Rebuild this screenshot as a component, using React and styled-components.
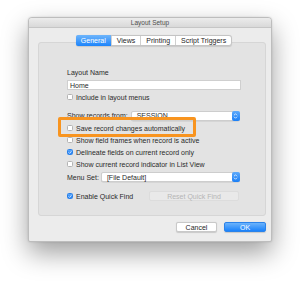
import React from 'react';
import styled, { createGlobalStyle } from 'styled-components';

const GlobalStyle = createGlobalStyle`
  html, body {
    margin: 0;
    background: #fff;
  }
  body {
    font-family: "Liberation Sans", Arial, sans-serif;
    font-size: 7px;
    color: #2a2a2a;
  }
`;

const Page = styled.div`
  width: 300px;
  height: 282px;
  box-sizing: border-box;
  padding: 17px 0 0 28px;
`;

const Window = styled.div`
  width: 244px;
  height: 225px;
  box-sizing: border-box;
  display: flex;
  flex-direction: column;
  background: #ececec;
  border: 1px solid #bdbdbd;
  border-radius: 4px 4px 2px 2px;
  box-shadow: 0 11px 26px rgba(0, 0, 0, 0.38), 0 0 2px rgba(0, 0, 0, 0.15);
  overflow: hidden;
`;

const TitleBar = styled.div`
  flex: none;
  height: 9px;
  display: flex;
  align-items: center;
  justify-content: center;
  background: linear-gradient(#ececec, #d9d9d9);
  border-bottom: 1px solid #c6c6c6;
  font-size: 6.5px;
  color: #4d4d4d;
`;

const Body = styled.div`
  display: flex;
  flex-direction: column;
  padding: 14px 5px 0 9px;
`;

const Panel = styled.div`
  height: 174px;
  box-sizing: border-box;
  display: flex;
  flex-direction: column;
  padding: 0 24px 0 28px;
  background: #e3e3e3;
  border: 1px solid #d6d6d6;
  border-radius: 3px;
`;

const TabStrip = styled.div`
  align-self: center;
  display: flex;
  margin-top: -8px;
  height: 11px;
  background: #fff;
  border: 1px solid #c4c4c4;
  border-radius: 3px;
  box-sizing: border-box;
  box-shadow: 0 0.5px 1px rgba(0, 0, 0, 0.12);
`;

const Tab = styled.div`
  display: flex;
  align-items: center;
  padding: 0 5px;
  font-size: 7px;
  color: ${p => (p.$active ? '#fff' : '#1e1e1e')};
  background: ${p => (p.$active ? 'linear-gradient(#6fb5fb, #1c84fb)' : 'transparent')};
  border-left: ${p => (p.$first ? 'none' : '1px solid #d0d0d0')};
  border-radius: ${p => (p.$first ? '2px 0 0 2px' : '0')};
  margin: ${p => (p.$first ? '-1px 0 -1px -1px' : '0')};
`;

const FieldLabel = styled.div`
  margin-top: 22px;
  line-height: 9px;
`;

const TextField = styled.div`
  margin-top: 3px;
  height: 10px;
  box-sizing: border-box;
  display: flex;
  align-items: center;
  padding-left: 2px;
  background: #fff;
  border: 0.5px solid #cfcfcf;
`;

const Row = styled.div`
  position: relative;
  display: flex;
  align-items: center;
  height: ${p => p.$h || 12}px;
  margin-top: ${p => p.$mt || 0}px;
`;

const Box = styled.span`
  flex: none;
  width: 6px;
  height: 6px;
  margin-right: 3px;
  box-sizing: border-box;
  border-radius: 1.5px;
  display: flex;
  align-items: center;
  justify-content: center;
  background: ${p => (p.$on ? 'linear-gradient(#5aa7fb, #1f7ff5)' : '#fff')};
  border: 0.5px solid ${p => (p.$on ? '#2a80e8' : '#b3b3b3')};
`;

const Highlight = styled.div`
  position: absolute;
  left: -9px;
  top: -5px;
  width: 138px;
  height: 20px;
  box-sizing: border-box;
  border: 3px solid #f8941f;
  border-radius: 2px;
  pointer-events: none;
`;

const Popup = styled.div`
  flex: 1;
  margin-left: ${p => p.$gap}px;
  margin-right: 1px;
  height: 10px;
  box-sizing: border-box;
  display: flex;
  align-items: center;
  padding-left: 5px;
  background: #fff;
  border: 0.5px solid #cdcdcd;
  border-radius: 2px;
  box-shadow: 0 0.5px 0.5px rgba(0, 0, 0, 0.12);
`;

const Stepper = styled.span`
  margin-left: auto;
  width: 8px;
  height: 10px;
  margin-right: -0.5px;
  border-radius: 2px;
  background: linear-gradient(#5eaafb, #1b7ff6);
  display: flex;
  align-items: center;
  justify-content: center;
`;

const Button = styled.div`
  display: flex;
  align-items: center;
  justify-content: center;
  width: ${p => p.$w}px;
  height: 10px;
  box-sizing: border-box;
  border-radius: 2px;
  font-size: 7px;
  color: ${p => (p.$primary ? '#fff' : p.$disabled ? '#b5b5b5' : '#1e1e1e')};
  background: ${p =>
    p.$primary ? 'linear-gradient(#6cb3fb, #1a82fb)' : p.$disabled ? '#e9e9e9' : '#fff'};
  border: 0.5px solid ${p => (p.$primary ? '#2b83ea' : p.$disabled ? '#dcdcdc' : '#c9c9c9')};
  box-shadow: ${p => (p.$disabled ? 'none' : '0 0.5px 1px rgba(0,0,0,0.15)')};
  margin-left: ${p => p.$ml || 0};
  margin-right: ${p => p.$mr || 0}px;
`;

const Footer = styled.div`
  display: flex;
  justify-content: flex-end;
  gap: 7px;
  margin-top: 6px;
`;

const Check = () => (
  <svg width="5" height="5" viewBox="0 0 10 10">
    <path d="M2 5.2 L4.2 7.4 L8 2.6" fill="none" stroke="#fff" strokeWidth="1.8" strokeLinecap="round" strokeLinejoin="round" />
  </svg>
);

const Arrows = () => (
  <svg width="5" height="8" viewBox="0 0 10 16">
    <path d="M2.5 6 L5 3.5 L7.5 6 M2.5 10 L5 12.5 L7.5 10" fill="none" stroke="#fff" strokeWidth="1.5" strokeLinecap="round" strokeLinejoin="round" />
  </svg>
);

const CheckRow = ({ on, children, mt, highlight }) => (
  <Row $mt={mt}>
    {highlight && <Highlight />}
    <Box $on={on}>{on && <Check />}</Box>
    {children}
  </Row>
);

const tabs = ['General', 'Views', 'Printing', 'Script Triggers'];

export default function App() {
  return (
    <>
      <GlobalStyle />
      <Page>
        <Window>
          <TitleBar>Layout Setup</TitleBar>
          <Body>
            <Panel>
              <TabStrip>
                {tabs.map((t, i) => (
                  <Tab key={t} $active={i === 0} $first={i === 0}>{t}</Tab>
                ))}
              </TabStrip>
              <FieldLabel>Layout Name</FieldLabel>
              <TextField>Home</TextField>
              <CheckRow mt={1}>Include in layout menus</CheckRow>
              <Row $h={11} $mt={7}>
                Show records from:
                <Popup $gap={3}>
                  SESSION
                  <Stepper><Arrows /></Stepper>
                </Popup>
              </Row>
              <CheckRow mt={1} highlight>Save record changes automatically</CheckRow>
              <CheckRow>Show field frames when record is active</CheckRow>
              <CheckRow on>Delineate fields on current record only</CheckRow>
              <CheckRow>Show current record indicator in List View</CheckRow>
              <Row $mt={1}>
                Menu Set:
                <Popup $gap={2}>
                  [File Default]
                  <Stepper><Arrows /></Stepper>
                </Popup>
              </Row>
              <Row $mt={7}>
                <Box $on><Check /></Box>
                Enable Quick Find
                <Button $w={90} $disabled $ml="auto" $mr={2}>Reset Quick Find</Button>
              </Row>
            </Panel>
            <Footer>
              <Button $w={41}>Cancel</Button>
              <Button $w={42} $primary>OK</Button>
            </Footer>
          </Body>
        </Window>
      </Page>
    </>
  );
}
